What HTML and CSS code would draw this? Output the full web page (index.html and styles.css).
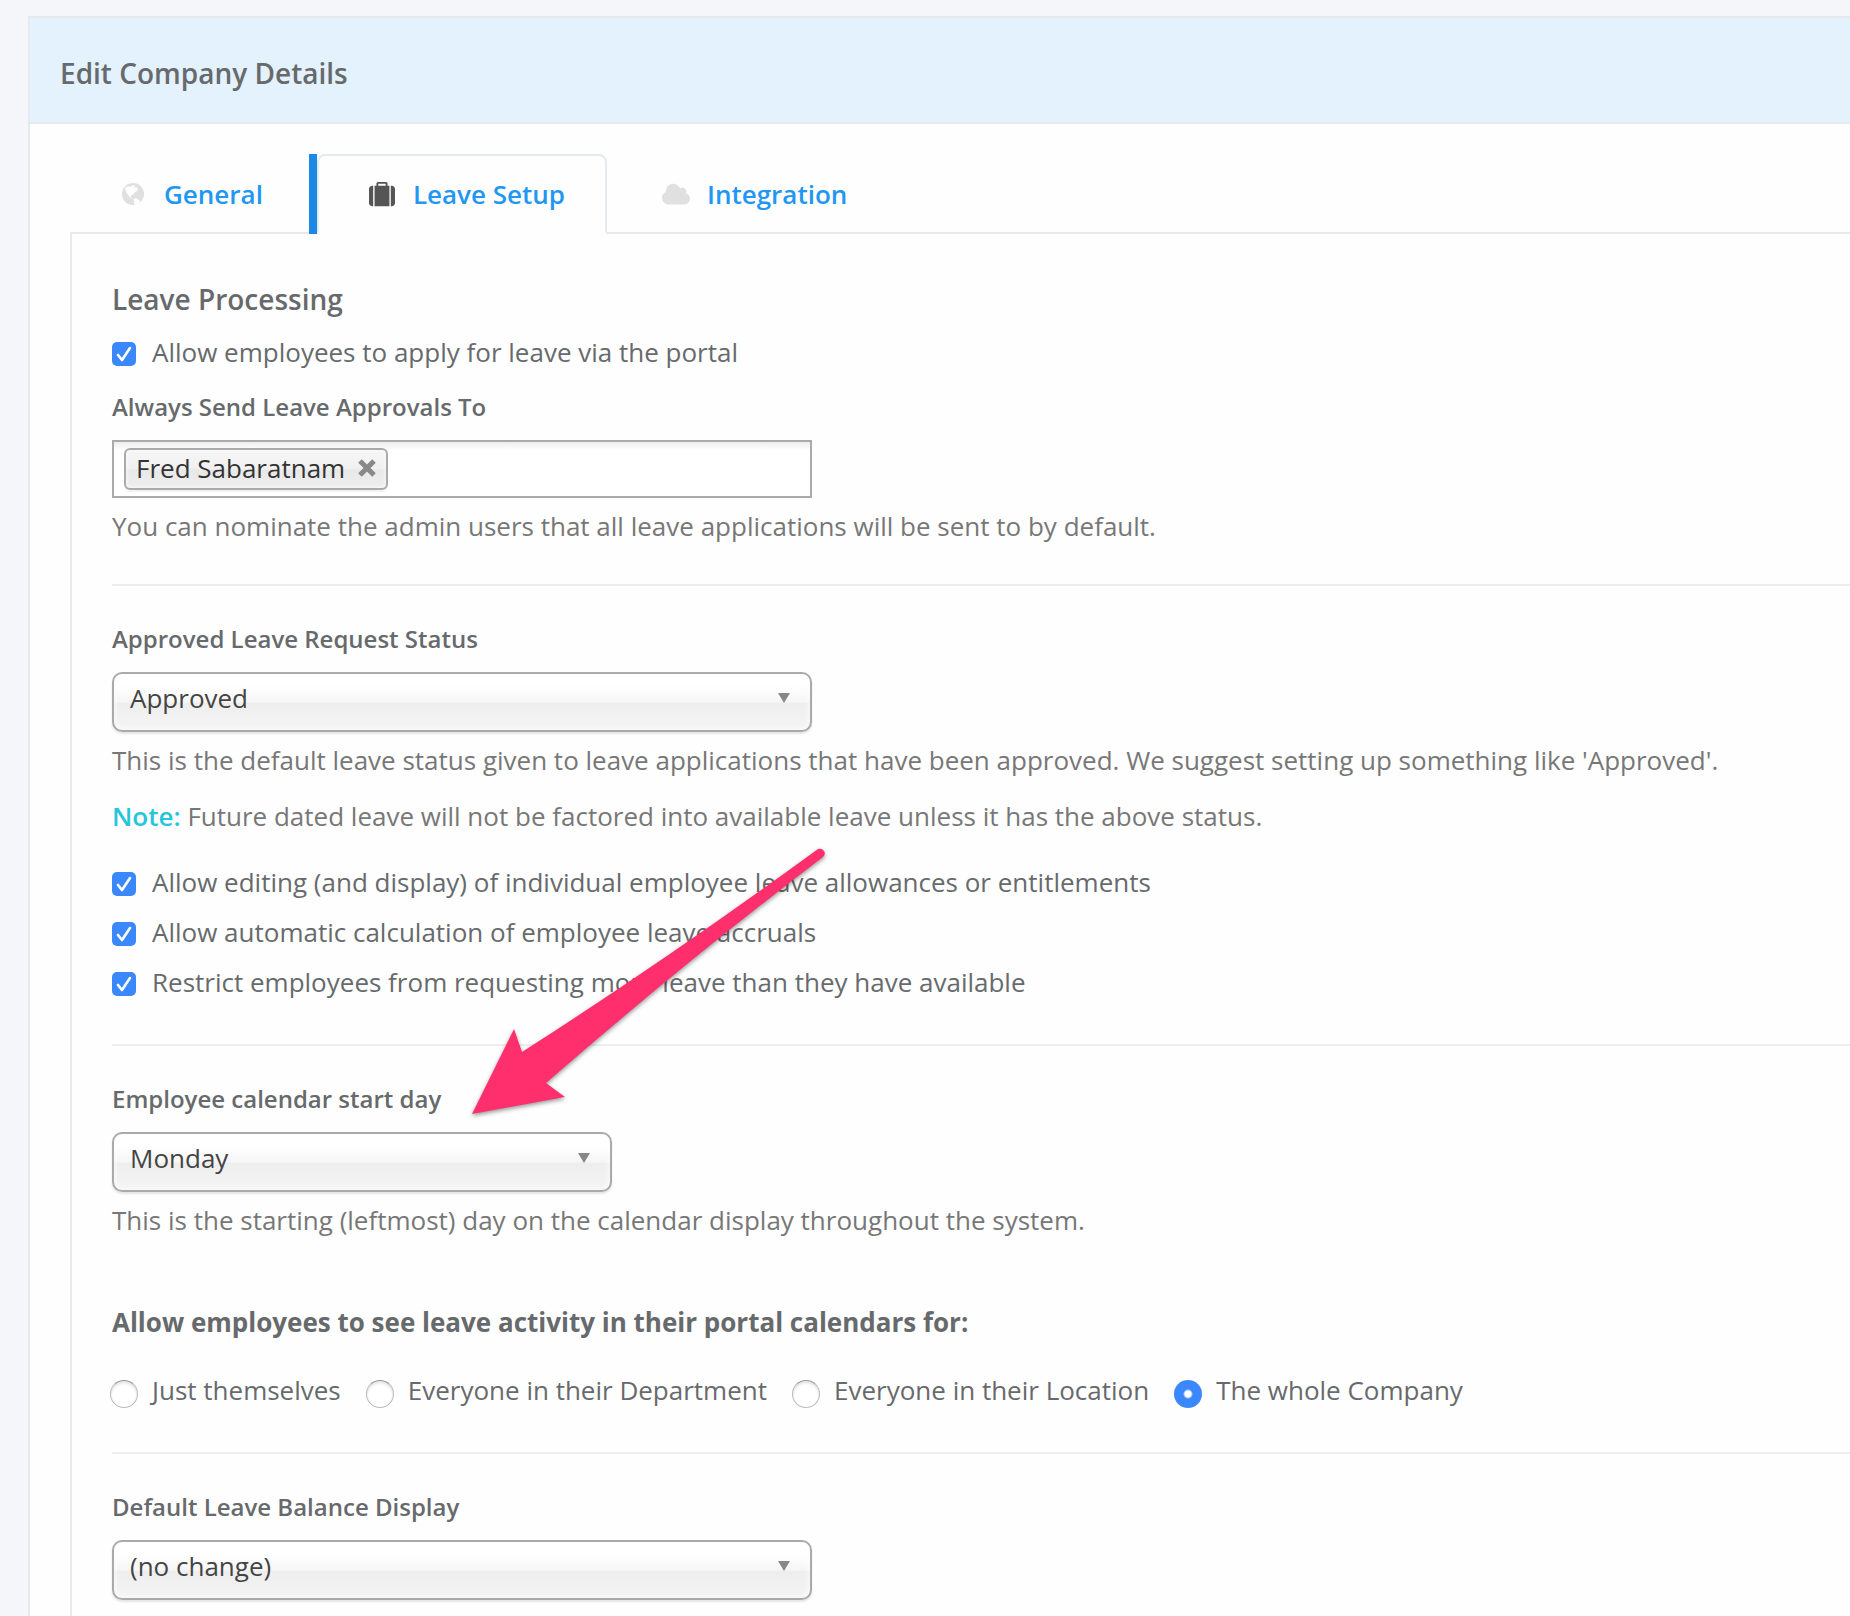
FILE: index.html
```html
<!DOCTYPE html>
<html lang="en">
<head>
    <meta charset="UTF-8">
    <meta name="viewport" content="width=device-width, initial-scale=1.0">
    <title>Edit Company Details</title>
    <link rel="stylesheet" href="styles.css">
</head>
<body>
    <div class="card">
        <h3 class="card-header">Edit Company Details</h3>
        <div class="card-body">
            <nav class="tabs">
                <a class="tab" href="#general">
                    <svg class="tab-icon" viewBox="0 0 34 26"><circle cx="17" cy="13" r="11"/><path class="land" d="M9 7l3-2 2 1 3-2 2 1-1 2 2-1 2 2-1 2-3 2-1 2-2 0 0 2 1 2 2 0 2-1 4 3-1 3-3 2-1 0-1-4 0-2-3-2-3-3-2-3z"/></svg>
                    <span>General</span>
                </a>
                <a class="tab active" href="#leave">
                    <svg class="tab-icon" viewBox="0 0 34 26"><path transform="translate(4 1) scale(.0145)" d="M640 256h512v-128h-512v128zm-352 0v1408h-64q-92 0-158-66t-66-158v-960q0-92 66-158t158-66h64zm1120 0v1408h-1024v-1408h128v-160q0-40 28-68t68-28h576q40 0 68 28t28 68v160h128zm384 224v960q0 92-66 158t-158 66h-64v-1408h64q92 0 158 66t66 158z"/></svg>
                    <span>Leave Setup</span>
                </a>
                <a class="tab" href="#integration">
                    <svg class="tab-icon" viewBox="0 0 34 26"><path transform="translate(3 1) scale(.0146)" d="M1920 1152q0 159-112.500 271.500t-271.500 112.500h-1088q-185 0-316.500-131.500t-131.500-316.500q0-132 71-241.500t187-163.500q-2-28-2-43 0-212 150-362t362-150q158 0 286.500 88t187.500 230q70-62 166-62 106 0 181 75t75 181q0 75-41 138 129 30 213 134.500t84 239.500z"/></svg>
                    <span>Integration</span>
                </a>
            </nav>
            <form class="panel">
                <section>
                    <h4>Leave Processing</h4>
                    <label class="check"><input type="checkbox" checked> Allow employees to apply for leave via the portal</label>
                    <label class="field-label" for="approvers">Always Send Leave Approvals To</label>
                    <div class="chosen-multi">
                        <span class="chip">Fred Sabaratnam
                            <button type="button" aria-label="Remove Fred Sabaratnam"><svg viewBox="0 0 18 18"><path d="M2 2l14 14M16 2L2 16"/></svg></button>
                        </span>
                        <input type="text" id="approvers">
                    </div>
                    <p class="help">You can nominate the admin users that all leave applications will be sent to by default.</p>
                </section>
                <section>
                    <label class="field-label" for="status">Approved Leave Request Status</label>
                    <select id="status" class="chosen">
                        <option>Approved</option>
                    </select>
                    <p class="help">This is the default leave status given to leave applications that have been approved. We suggest setting up something like 'Approved'.</p>
                    <p class="note"><strong>Note:</strong> Future dated leave will not be factored into available leave unless it has the above status.</p>
                    <div class="checks">
                        <label class="check"><input type="checkbox" checked> Allow editing (and display) of individual employee leave allowances or entitlements</label>
                        <label class="check"><input type="checkbox" checked> Allow automatic calculation of employee leave accruals</label>
                        <label class="check"><input type="checkbox" checked> Restrict employees from requesting more leave than they have available</label>
                    </div>
                    <svg class="arrow" viewBox="0 0 370 280"><path d="M4 274L46 189L54 212Q201 118 350 9Q354 8 356 11Q358 14 355 17Q217 122 78 243L97 257Z"/></svg>
                </section>
                <section>
                    <label class="field-label" for="startday">Employee calendar start day</label>
                    <select id="startday" class="chosen short">
                        <option>Monday</option>
                    </select>
                    <p class="help">This is the starting (leftmost) day on the calendar display throughout the system.</p>
                    <fieldset>
                        <legend>Allow employees to see leave activity in their portal calendars for:</legend>
                        <div class="radios">
                            <label><input type="radio" name="activity"> Just themselves</label>
                            <label><input type="radio" name="activity"> Everyone in their Department</label>
                            <label><input type="radio" name="activity"> Everyone in their Location</label>
                            <label><input type="radio" name="activity" checked> The whole Company</label>
                        </div>
                    </fieldset>
                </section>
                <section>
                    <label class="field-label" for="balance">Default Leave Balance Display</label>
                    <select id="balance" class="chosen">
                        <option>(no change)</option>
                    </select>
                </section>
            </form>
        </div>
    </div>
</body>
</html>
```

FILE: styles.css
```css
* { box-sizing: border-box; }
body { margin: 0; padding: 16px 0 0 28px; background: #f4f6fa; color: #676a6c; font-family: "Open Sans", sans-serif; font-size: 26px; line-height: 36px; }
h3, h4, p { margin: 0; }

.card { background: #fefefe; border-top: 2px solid #e7eaec; border-left: 2px solid #e7eaec; }
.card-header { padding: 37px 30px 31px; border-bottom: 2px solid #e7eaec; background: #e3f2fd; font-size: 28px; font-weight: 600; }
.card-body { padding: 30px 0 0 40px; }

/* tabs */
.tabs { display: flex; gap: 4px; border-bottom: 2px solid #e7eaec; }
.tab { display: flex; align-items: center; gap: 14px; height: 80px; margin-bottom: -2px; padding: 0 40px 0 46px; border: 2px solid transparent; color: #2196f3; font-weight: 600; text-decoration: none; }
.tab:first-child { padding-left: 44px; }
.tab.active { position: relative; margin-left: 8px; background: #fefefe; border-color: #e7eaec; border-bottom-color: #fefefe; border-radius: 8px 8px 0 0; }
.tab.active::before { content: ""; position: absolute; top: -2px; bottom: -2px; left: -10px; width: 8px; background: #1e88e5; }
.tab-icon { width: 34px; height: 26px; fill: #e0e0e0; }
.tab-icon .land { fill: #fefefe; }
.tab.active .tab-icon { fill: #555; }

.panel { padding: 48px 0 16px 40px; border-left: 2px solid #e7eaec; }
section { position: relative; padding-bottom: 44px; margin-bottom: 36px; border-bottom: 2px solid #eee; }
section:first-child { padding-bottom: 40px; }
section:last-child { padding-bottom: 0; margin-bottom: 0; border-bottom: none; }
h4 { margin-bottom: 18px; font-size: 28px; font-weight: 600; line-height: 34px; }
.field-label { display: block; margin-bottom: 16px; font-size: 24px; font-weight: 600; line-height: 34px; }
.help { margin-top: 10px; color: #777; }
.note { margin-top: 20px; color: #777; }
.note strong { color: #26c6da; font-weight: 600; }

/* checkboxes and radios */
.check { display: flex; align-items: center; gap: 16px; }
h4 + .check { margin-bottom: 20px; }
.checks { display: grid; gap: 14px; margin-top: 30px; }
input[type=checkbox] { appearance: none; width: 24px; height: 24px; margin: 4px 0 0; border-radius: 5px; background: #3b88fd url("data:image/svg+xml,%3Csvg xmlns='http://www.w3.org/2000/svg' viewBox='0 0 24 24'%3E%3Cpath d='M6 13l4 5 8-12' fill='none' stroke='white' stroke-width='2.600' stroke-linecap='round' stroke-linejoin='round'/%3E%3C/svg%3E"); }
fieldset { margin: 66px 0 0; padding: 0; border: none; }
legend { padding: 0; font-weight: 700; }
.radios { display: flex; gap: 25px; margin: 32px 0 0 -2px; }
.radios label { display: flex; align-items: center; gap: 14px; }
input[type=radio] { appearance: none; width: 28px; height: 28px; margin: 8px 0 0; border: 1px solid #bbb; border-top-color: #999; border-radius: 50%; background: #fff; box-shadow: inset 0 2px 3px rgba(0, 0, 0, .12); }
input[type=radio]:checked { border: none; background: radial-gradient(circle, #fff 3px, #3b88fd 5px); box-shadow: none; }

/* chosen dropdowns */
.chosen { display: block; appearance: none; width: 700px; max-width: 100%; height: 60px; padding: 0 50px 8px 16px; border: 2px solid #aaa; border-radius: 10px; color: #444; font: inherit; background: url("data:image/svg+xml,%3Csvg xmlns='http://www.w3.org/2000/svg' width='12' height='10'%3E%3Cpath d='M0 0h12L6 10z' fill='%23888'/%3E%3C/svg%3E") no-repeat right 20px top 19px, linear-gradient(#fff 20%, #f6f6f6 50%, #eee 52%, #f4f4f4 100%); box-shadow: inset 0 0 6px #fff, 0 2px 2px rgba(0, 0, 0, .1); }
.chosen.short { width: 500px; }
.chosen-multi { display: flex; width: 700px; max-width: 100%; padding: 6px 10px; border: 2px solid #aaa; background: linear-gradient(#eee 1%, #fff 15%); }
.chosen-multi input { flex: 1; min-width: 0; border: none; outline: none; background: none; font: inherit; }
.chip { display: flex; align-items: center; gap: 13px; height: 42px; padding: 0 10px 2px; border: 2px solid #aaa; border-radius: 6px; color: #333; background: linear-gradient(#f4f4f4 20%, #f0f0f0 50%, #e8e8e8 52%, #eee 100%); box-shadow: inset 0 0 4px #fff, 0 2px 0 rgba(0, 0, 0, .05); }
.chip button { display: flex; padding: 0; border: none; background: none; }
.chip svg { width: 18px; height: 18px; fill: none; stroke: #888; stroke-width: 5; }

/* pointer over the calendar setting */
.arrow { position: absolute; left: 356px; top: 218px; width: 370px; height: 280px; z-index: 1; fill: #ff2f6e; filter: drop-shadow(0 2px 2px rgba(0, 0, 0, .4)); pointer-events: none; }
```
